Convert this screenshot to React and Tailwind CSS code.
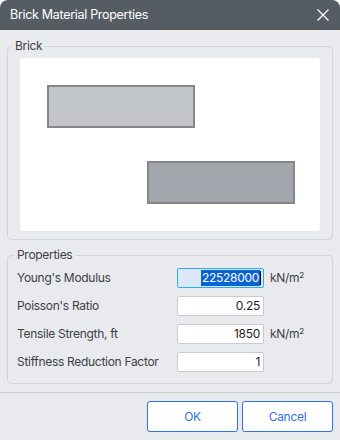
import React from "react";

const font = { fontFamily: "Inter, 'Noto Sans', sans-serif" };

function Field({ value, focused }) {
  if (focused) {
    return (
      <div className="h-[20px] w-[87px] border border-[#29b1ef] bg-[#dce8fa] rounded-[2px] flex items-center justify-end pr-[2px] text-[12px] tracking-[-0.3px] leading-none">
        <span className="bg-[#0a63d3] text-white px-[1px] py-[2px]">{value}</span>
        <span className="w-[1px] h-[14px] bg-black"></span>
      </div>
    );
  }
  return (
    <div className="h-[20px] w-[87px] border border-[#c9cbcf] bg-white rounded-[2px] flex items-center justify-end pr-[3px] text-[12px] tracking-[-0.3px] text-[#1f2226] leading-none">
      {value}
    </div>
  );
}

export default function App() {
  const rows = [
    { label: "Young's Modulus", value: "22528000", unit: true, focused: true },
    { label: "Poisson's Ratio", value: "0.25", unit: false },
    { label: "Tensile Strength, ft", value: "1850", unit: true },
    { label: "Stiffness Reduction Factor", value: "1", unit: false },
  ];
  return (
    <div style={font} className="w-[340px] h-[440px] flex flex-col bg-[#e9eaed] rounded-t-[8px] overflow-hidden tracking-[-0.3px]">
      <div className="h-[30px] shrink-0 bg-[#565c64] flex items-center justify-between pl-[10px] pr-[11px]">
        <span className="text-white text-[12.5px]">Brick Material Properties</span>
        <svg width="12" height="12" viewBox="0 0 12 12">
          <path d="M0.5 0.5 L11.5 11.5 M11.5 0.5 L0.5 11.5" stroke="#ffffff" strokeWidth="1.3" />
        </svg>
      </div>

      <div className="px-[7px]">
        <fieldset className="mt-[8px] border border-[#d2d4d8] rounded-[4px] px-[12px] pb-[8px] pt-[4px]">
          <legend className="-ml-[8px] px-[3px] text-[12px] leading-[16px] text-[#3d4046]">Brick</legend>
          <div className="h-[173px] bg-white rounded-[3px]">
            <svg width="300" height="173" viewBox="0 0 300 173">
              <rect x="28" y="28" width="146" height="41" fill="#c2c5c9" stroke="#868686" strokeWidth="2" />
              <rect x="128" y="104" width="146" height="41" fill="#a2a7ae" stroke="#868686" strokeWidth="2" />
            </svg>
          </div>
        </fieldset>

        <fieldset className="mt-[7px] border border-[#d2d4d8] rounded-[4px] pl-[9px] pr-[8px] pb-[11px] pt-[5px]">
          <legend className="-ml-[3px] px-[3px] text-[12px] leading-[16px] text-[#3d4046]">Properties</legend>
          <div className="grid grid-cols-[160px_87px_auto] gap-y-[8px] items-center">
            {rows.map((r) => (
              <React.Fragment key={r.label}>
                <span className="text-[12px] text-[#3d4046] leading-none">{r.label}</span>
                <Field value={r.value} focused={r.focused} />
                <span className="pl-[6px] text-[12px] text-[#3d4046] leading-none">
                  {r.unit ? <>kN/m<sup className="text-[8px]">2</sup></> : null}
                </span>
              </React.Fragment>
            ))}
          </div>
        </fieldset>
      </div>

      <div className="mt-[8px] border-t border-[#c8cacd] flex justify-end gap-[4px] pt-[8px] pr-[7px]">
        <button className="w-[91px] h-[31px] bg-white border border-[#2a72e6] rounded-[3px] text-[12px] text-[#2f6fe0]">OK</button>
        <button className="w-[91px] h-[31px] bg-white border border-[#2a72e6] rounded-[3px] text-[12px] text-[#2f6fe0]">Cancel</button>
      </div>
    </div>
  );
}
